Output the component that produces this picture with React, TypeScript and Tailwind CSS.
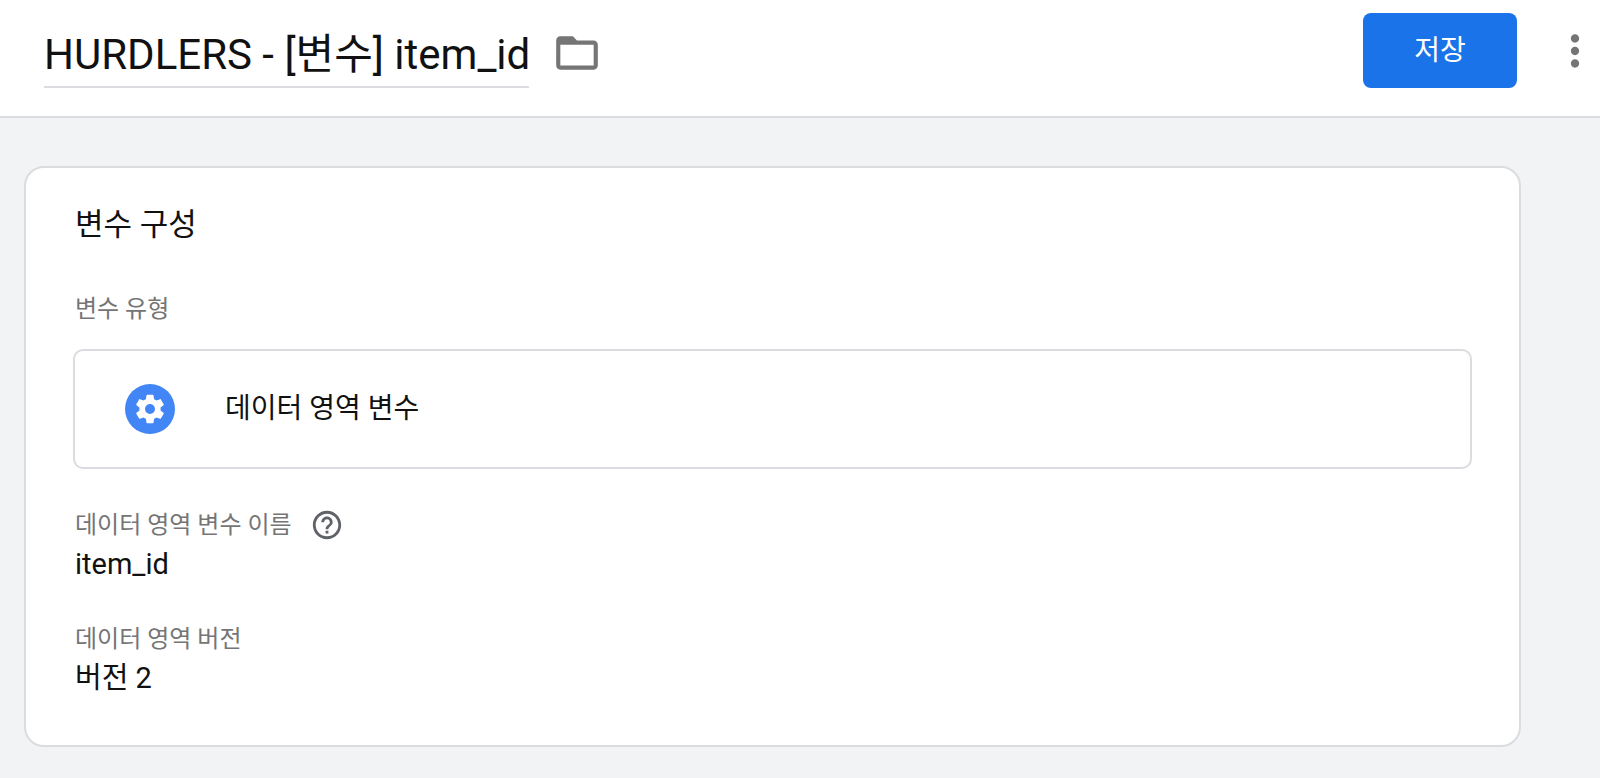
import type { ReactNode } from "react";

function Icon({ d, className }: { d: string; className: string }) {
  return (
    <svg viewBox="0 0 24 24" fill="currentColor" aria-hidden="true" className={className}>
      <path d={d} />
    </svg>
  );
}

const FOLDER =
  "M20 6h-8l-2-2H4c-1.1 0-1.99.9-1.99 2L2 18c0 1.1.9 2 2 2h16c1.1 0 2-.9 2-2V8c0-1.1-.9-2-2-2zm0 12H4V8h16v10z";
const MORE =
  "M12 8c1.1 0 2-.9 2-2s-.9-2-2-2-2 .9-2 2 .9 2 2 2zm0 2c-1.1 0-2 .9-2 2s.9 2 2 2 2-.9 2-2-.9-2-2-2zm0 6c-1.1 0-2 .9-2 2s.9 2 2 2 2-.9 2-2-.9-2-2-2z";
const GEAR =
  "M19.43 12.98c.04-.32.07-.64.07-.98s-.03-.66-.07-.98l2.11-1.65c.19-.15.24-.42.12-.64l-2-3.46c-.12-.22-.39-.3-.61-.22l-2.49 1c-.52-.4-1.08-.73-1.69-.98l-.38-2.65C14.46 2.18 14.25 2 14 2h-4c-.25 0-.46.18-.49.42l-.38 2.65c-.61.25-1.17.59-1.69.98l-2.49-1c-.23-.09-.49 0-.61.22l-2 3.46c-.13.22-.07.49.12.64l2.11 1.65c-.04.32-.07.65-.07.98s.03.66.07.98l-2.11 1.65c-.19.15-.24.42-.12.64l2 3.46c.12.22.39.3.61.22l2.49-1c.52.4 1.08.73 1.69.98l.38 2.65c.03.24.24.42.49.42h4c.25 0 .46-.18.49-.42l.38-2.65c.61-.25 1.17-.59 1.69-.98l2.49 1c.23.09.49 0 .61-.22l2-3.46c.12-.22.07-.49-.12-.64l-2.11-1.65zM12 15.5c-1.93 0-3.5-1.57-3.5-3.5s1.57-3.5 3.5-3.5 3.5 1.57 3.5 3.5-1.57 3.5-3.5 3.5z";
const HELP =
  "M11 18h2v-2h-2v2zm1-16C6.48 2 2 6.48 2 12s4.48 10 10 10 10-4.48 10-10S17.52 2 12 2zm0 18c-4.41 0-8-3.59-8-8s3.59-8 8-8 8 3.59 8 8-3.59 8-8 8zm0-14c-2.21 0-4 1.79-4 4h2c0-1.1.9-2 2-2s2 .9 2 2c0 2-3 1.75-3 5h2c0-2.25 3-2.5 3-5 0-2.21-1.79-4-4-4z";

function Field({ label, help, children }: { label: string; help?: boolean; children: ReactNode }) {
  return (
    <div>
      <dt className="flex h-9 items-center gap-[18px] text-2xl text-[#757575]">
        {label}
        {help && (
          <button type="button" aria-label="도움말" className="text-[#5f6368]">
            <Icon d={HELP} className="size-[34px]" />
          </button>
        )}
      </dt>
      <dd className="flex h-11 items-center text-[29px]">{children}</dd>
    </div>
  );
}

export default function App() {
  return (
    <div className="flex min-h-screen flex-col bg-[#f1f3f4] font-['Roboto','Noto_Sans_CJK_KR',sans-serif] text-[#111111]">
      <header className="flex h-[118px] items-start border-b-2 border-[#dadce0] bg-white pl-11">
        <input
          type="text"
          aria-label="변수 이름"
          defaultValue="HURDLERS - [변수] item_id"
          className="mt-4 h-[72px] w-[485px] border-b-2 border-[#dadce0] bg-transparent pb-0.5 text-[42px] outline-none"
        />
        <button type="button" aria-label="폴더" className="mt-7 ml-[23px] text-[#757575]">
          <Icon d={FOLDER} className="size-[50px]" />
        </button>
        <button
          type="button"
          className="mt-[13px] ml-auto h-[75px] w-[154px] rounded-lg bg-[#1a73e8] text-[28px] text-white"
        >
          저장
        </button>
        <button type="button" aria-label="더보기" className="mt-[26px] ml-[33px] text-[#757575]">
          <Icon d={MORE} className="size-[50px]" />
        </button>
      </header>

      <main className="pt-12 pr-[79px] pb-8 pl-6">
        <section className="rounded-[20px] border-2 border-[#dadce0] bg-white px-[47px] pt-8 pb-11">
          <h2 className="flex h-[50px] items-center pl-0.5 text-[31px]">변수 구성</h2>
          <p className="mt-[41px] flex h-9 items-center pl-0.5 text-2xl text-[#757575]">변수 유형</p>
          <button
            type="button"
            className="mt-[22px] flex h-[120px] w-full items-center gap-[50px] rounded-[10px] border-2 border-[#dadce0] pl-[50px] text-left text-[28px]"
          >
            <span className="flex size-[50px] items-center justify-center rounded-full bg-[#4285f4] text-white">
              <Icon d={GEAR} className="size-[34px]" />
            </span>
            데이터 영역 변수
          </button>
          <dl className="mt-[38px] flex flex-col gap-[34px] pl-0.5">
            <Field label="데이터 영역 변수 이름" help>
              item_id
            </Field>
            <Field label="데이터 영역 버전">버전 2</Field>
          </dl>
        </section>
      </main>
    </div>
  );
}
